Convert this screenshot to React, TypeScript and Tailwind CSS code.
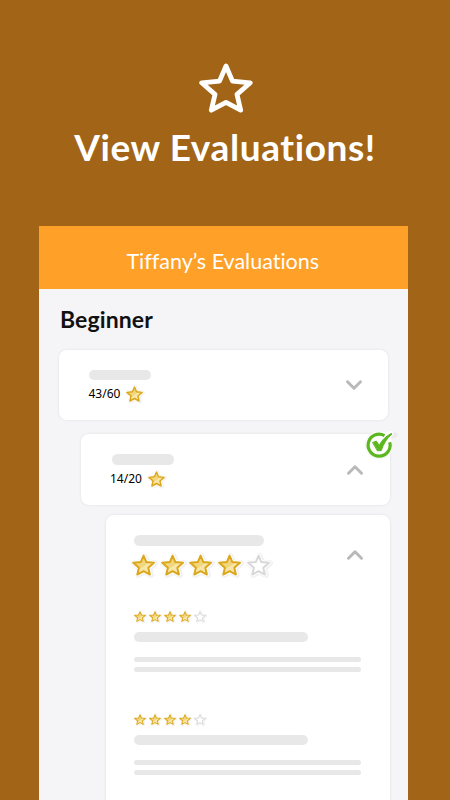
import clsx from "clsx";

const STAR =
  "M27 3 L33.5 18.1 L51.3 19.8 L38 31.4 L41.7 47.2 L27 39.3 L12.3 47.2 L16 31.4 L2.7 19.8 L20.5 18.1 Z";

type StarProps = {
  filled?: boolean;
  className?: string;
};

function Star({ filled = true, className }: StarProps) {
  return (
    <svg
      viewBox="0 0 54 50"
      className={clsx("shrink-0 overflow-visible", className)}
      strokeLinejoin="round"
    >
      <path d={STAR} fill="#f1f1f2" stroke="#f1f1f2" strokeWidth="14" transform="translate(2 1)" />
      <path d={STAR} fill="#fff" stroke="#fff" strokeWidth="9" />
      <path d={STAR} fill={filled ? "#f7e6a8" : "#fff"} />
      {filled && (
        <path
          d="M27 3 L33.5 18.1 L40 19 L15 36 L16 31.4 L2.7 19.8 L20.5 18.1 Z"
          fill="#f1d67c"
        />
      )}
      <path
        d={STAR}
        fill="none"
        stroke={filled ? "#dba71c" : "#d8d8d8"}
        strokeWidth="4.6"
      />
    </svg>
  );
}

function Chevron({ up = false }: { up?: boolean }) {
  return (
    <svg
      viewBox="0 0 18 12"
      className={clsx("h-3 w-[18px] shrink-0", up && "rotate-180")}
      fill="none"
      stroke="#b9b9b9"
      strokeWidth="3"
      strokeLinecap="round"
      strokeLinejoin="round"
    >
      <path d="M2.5 2.8 L9 9.2 L15.5 2.8" />
    </svg>
  );
}

function CheckBadge() {
  return (
    <svg
      viewBox="0 0 34 32"
      className="absolute -top-[5px] left-[282.5px] h-8 w-[34px]"
      fill="none"
      strokeLinecap="round"
      strokeLinejoin="round"
    >
      <path d="M22 10 L31 6" stroke="#ebebed" strokeWidth="5" />
      <circle cx="15" cy="16" r="14" fill="#fff" stroke="#f0f0f1" strokeWidth="0.7" />
      <path d="M17 14 L26 5" stroke="#fff" strokeWidth="6" />
      <path d="M20.5 6.6 A11 11 0 1 0 25.7 13.2" stroke="#5cb71f" strokeWidth="3.2" strokeLinecap="butt" />
      <path
        d="M8.9 13.4 L12.4 12.2 L15.2 16.4 C18 11 21.8 7 27.5 4.4 L28 5 C22.8 9.3 19.6 14.5 17.2 21.7 L13.7 21.7 Z"
        fill="#5cb71f"
        stroke="#5cb71f"
        strokeWidth="1"
      />
    </svg>
  );
}

function Review() {
  return (
    <div>
      <div className="flex gap-[3px]">
        {[1, 2, 3, 4, 5].map((n) => (
          <Star key={n} filled={n <= 4} className="h-[11px] w-3" />
        ))}
      </div>
      <div className="mt-[10px] h-[10.5px] w-[174px] rounded-full bg-[#e8e8e8]" />
      <div className="mt-[14.5px] h-[5px] w-[227px] rounded-full bg-[#e8e8e8]" />
      <div className="mt-[5px] h-[5px] w-[227px] rounded-full bg-[#e8e8e8]" />
    </div>
  );
}

const card = "bg-white shadow-[0_0_3px_rgba(0,0,0,0.09)]";

export default function App() {
  return (
    <div className="flex h-[800px] w-[450px] flex-col overflow-hidden bg-[#a26417] font-['Lato','Liberation_Sans',sans-serif] [font-variant-ligatures:none]">
      <header className="flex h-[226px] shrink-0 flex-col items-center pt-[63px] text-white">
        <svg
          viewBox="0 0 54 50"
          className="ml-[2px] h-[50px] w-[54px]"
          fill="none"
          stroke="currentColor"
          strokeWidth="4.8"
          strokeLinejoin="round"
        >
          <path d={STAR} />
        </svg>
        <h1 className="mt-[10px] whitespace-nowrap text-[37px] font-bold leading-[48px] tracking-[0.6px]">
          View Evaluations!
        </h1>
      </header>

      <main className="mr-[42px] ml-[38.5px] min-h-0 grow bg-[#f5f5f8]">
        <div className="flex h-[63.4px] items-center justify-center bg-[#ffa028] pt-[7px] text-white">
          <span className="mr-[1px] whitespace-nowrap text-[21.5px] leading-7">Tiffany’s Evaluations</span>
        </div>

        <h2 className="pt-[16px] pl-[21.5px] text-[23px] font-bold leading-7 tracking-[0.1px] text-[#111]">
          Beginner
        </h2>

        <section
          className={clsx(card, "mt-[16.5px] ml-[20px] flex h-[70.5px] w-[329.5px] rounded-[8px] pl-[30px]")}
        >
          <div className="grow pt-5">
            <div className="h-[10.5px] w-[62px] rounded-full bg-[#e8e8e8]" />
            <div className="mt-[6px] flex items-center gap-[5px]">
              <span className="w-8 whitespace-nowrap font-['Noto_Sans','Lato',sans-serif] text-[12px] leading-4 text-black">43/60</span>
              <Star className="h-4 w-[17px]" />
            </div>
          </div>
          <div className="mt-[29.5px] mr-[25.5px]">
            <Chevron />
          </div>
        </section>

        <section
          className={clsx(card, "relative mt-[13.5px] ml-[42.5px] flex h-[71.5px] w-[308.5px] rounded-[8px] pl-[29px]")}
        >
          <div className="grow pt-[20.5px]">
            <div className="ml-[1.5px] h-[10.5px] w-[62px] rounded-full bg-[#e8e8e8]" />
            <div className="mt-[6px] flex items-center gap-[6px]">
              <span className="w-8 whitespace-nowrap font-['Noto_Sans','Lato',sans-serif] text-[12px] leading-4 text-black">14/20</span>
              <Star className="h-4 w-[17px]" />
            </div>
          </div>
          <div className="mt-[30px] mr-[26px]">
            <Chevron up />
          </div>
          <CheckBadge />
        </section>

        <section
          className={clsx(card, "mt-[10px] ml-[67.5px] flex h-[320px] w-[283.5px] rounded-[8px] pl-[28px]")}
        >
          <div className="grow pt-[20px]">
            <div className="h-[10.5px] w-[130px] rounded-full bg-[#e8e8e8]" />
            <div className="mt-[8.5px] -ml-[2px] flex gap-[5.5px]">
              {[1, 2, 3, 4, 5].map((n) => (
                <Star key={n} filled={n <= 4} className="h-[22px] w-[23.2px]" />
              ))}
            </div>
            <div className="mt-[34.3px] flex flex-col gap-[42px]">
              <Review />
              <Review />
            </div>
          </div>
          <div className="-ml-[40px] mt-[33.5px] mr-[26px]">
            <Chevron up />
          </div>
        </section>
      </main>
    </div>
  );
}
